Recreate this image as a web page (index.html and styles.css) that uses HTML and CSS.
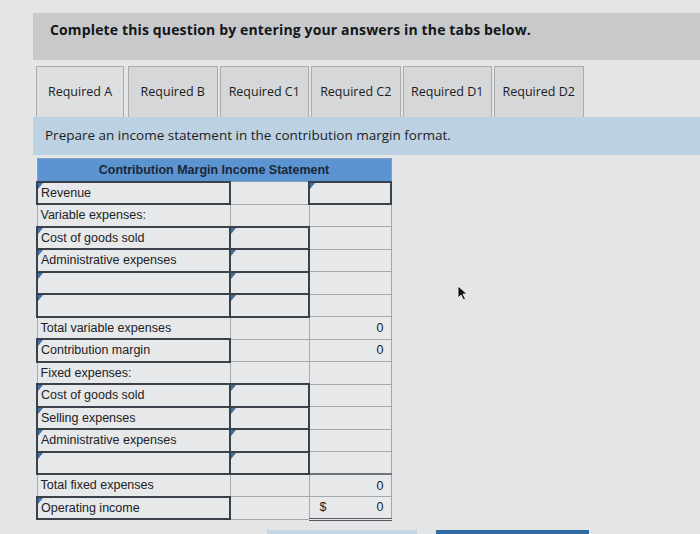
FILE: index.html
```html
<!DOCTYPE html>
<html>
<head>
<meta charset="utf-8">
<link rel="stylesheet" href="styles.css">
</head>
<body>
<div class="page">
  <div class="banner">Complete this question by entering your answers in the tabs below.</div>
  <div class="tabs">
    <div class="tab active">Required A</div>
    <div class="tab">Required B</div>
    <div class="tab">Required C1</div>
    <div class="tab">Required C2</div>
    <div class="tab">Required D1</div>
    <div class="tab">Required D2</div>
  </div>
  <div class="prompt">Prepare an income statement in the contribution margin format.</div>
  <table class="stmt">
    <colgroup>
      <col class="c-lbl">
      <col class="c-mid">
      <col class="c-amt">
    </colgroup>
    <thead>
      <tr class="head-row"><th colspan="3">Contribution Margin Income Statement</th></tr>
    </thead>
    <tbody>
      <tr><td class="lbl inp">Revenue</td><td class="mid"></td><td class="amt inp"></td></tr>
      <tr><td class="lbl">Variable expenses:</td><td class="mid"></td><td class="amt"></td></tr>
      <tr><td class="lbl inp">Cost of goods sold</td><td class="mid inp"></td><td class="amt"></td></tr>
      <tr><td class="lbl inp">Administrative expenses</td><td class="mid inp"></td><td class="amt"></td></tr>
      <tr><td class="lbl inp"></td><td class="mid inp"></td><td class="amt"></td></tr>
      <tr><td class="lbl inp"></td><td class="mid inp"></td><td class="amt"></td></tr>
      <tr><td class="lbl">Total variable expenses</td><td class="mid"></td><td class="amt">0</td></tr>
      <tr><td class="lbl inp">Contribution margin</td><td class="mid"></td><td class="amt">0</td></tr>
      <tr><td class="lbl">Fixed expenses:</td><td class="mid"></td><td class="amt"></td></tr>
      <tr><td class="lbl inp">Cost of goods sold</td><td class="mid inp"></td><td class="amt"></td></tr>
      <tr><td class="lbl inp">Selling expenses</td><td class="mid inp"></td><td class="amt"></td></tr>
      <tr><td class="lbl inp">Administrative expenses</td><td class="mid inp"></td><td class="amt"></td></tr>
      <tr><td class="lbl inp"></td><td class="mid inp"></td><td class="amt"></td></tr>
      <tr><td class="lbl">Total fixed expenses</td><td class="mid"></td><td class="amt total">0</td></tr>
      <tr><td class="lbl inp">Operating income</td><td class="mid"></td><td class="amt final"><span class="cur">$</span>0</td></tr>
    </tbody>
  </table>
  <div class="footer-bits">
    <div class="btn-light"></div>
    <div class="btn-dark"></div>
  </div>
</div>
<svg class="cursor" width="12" height="16" viewBox="0 0 12 16"><path d="M1 1 L1 13 L4 10 L6.5 15 L8.5 14 L6 9 L10 9 Z" fill="#111" stroke="#fff" stroke-width="0.8"/></svg>
</body>
</html>
```

FILE: styles.css
```css
html, body {
  margin: 0;
  padding: 0;
}
body {
  background: #e3e5e7;
  width: 700px;
  height: 534px;
  overflow: hidden;
  position: relative;
  font-family: "Open Sans", "DejaVu Sans", sans-serif;
  color: #1d1f22;
}
.page {
  padding: 13px 0 0 33px;
}
.banner {
  background: #c7c9cb;
  height: 47px;
  box-sizing: border-box;
  padding: 7px 0 0 17px;
  font-weight: 700;
  font-size: 14px;
  letter-spacing: 0.14px;
  line-height: 20px;
  color: #141618;
}
.tabs {
  display: flex;
  gap: 2px;
  margin: 6px 0 0 3px;
  height: 51px;
  align-items: stretch;
}
.tab {
  width: 89.5px;
  box-sizing: border-box;
  border: 1px solid #a9abad;
  border-bottom: none;
  background: #d5d7d9;
  font-size: 12.5px;
  display: flex;
  align-items: center;
  justify-content: center;
  padding-bottom: 2px;
  color: #1a1c1f;
}
.tab.active {
  background: #dcdedf;
  width: 88px;
  margin-right: 2px;
}
.prompt {
  background: #bcd1e1;
  height: 38px;
  box-sizing: border-box;
  padding: 8px 0 0 12px;
  font-size: 13.5px;
  line-height: 20px;
  color: #1e2124;
}
.stmt {
  margin: 3px 0 0 3px;
  border-collapse: collapse;
  width: 354px;
  table-layout: fixed;
  font-family: "Liberation Sans", Arial, sans-serif;
  font-size: 12.5px;
  background: #e6e8ea;
}
.c-lbl { width: 193px; }
.c-mid { width: 79px; }
.c-amt { width: 82px; }
.stmt tr {
  height: 22.5px;
}
.stmt tr.head-row {
  height: 23px;
}
.stmt th {
  background: #5c94d1;
  color: #1a2738;
  font-weight: 700;
  font-size: 12.5px;
  padding: 0;
  line-height: 14px;
  border: 1px solid #7f9fbf;
  text-align: center;
}
.stmt td {
  padding: 0 3px;
  line-height: 14px;
  border: 1px solid #a5a8ab;
  position: relative;
  color: #202225;
  white-space: nowrap;
  overflow: hidden;
}
.stmt td.amt {
  text-align: right;
  padding-right: 7px;
}
.stmt td.inp {
  border: 2px solid #3a4149;
}
.stmt td.inp::before {
  content: "";
  position: absolute;
  left: 0;
  top: 0;
  border-top: 6px solid #3d6fa8;
  border-right: 5px solid transparent;
}
.stmt td.total {
  border-top: 2px solid #707377;
}
.stmt td.final {
  border-bottom: 3px double #55595e;
}
.cur {
  float: left;
  padding-left: 7px;
}
.footer-bits {
  display: flex;
  margin: 9px 0 0 234px;
  gap: 19px;
}
.btn-light {
  width: 150px;
  height: 10px;
  background: #c4d6e4;
}
.btn-dark {
  width: 153px;
  height: 10px;
  background: #2f6aa5;
}
.cursor {
  position: absolute;
  left: 457px;
  top: 285px;
}
```
